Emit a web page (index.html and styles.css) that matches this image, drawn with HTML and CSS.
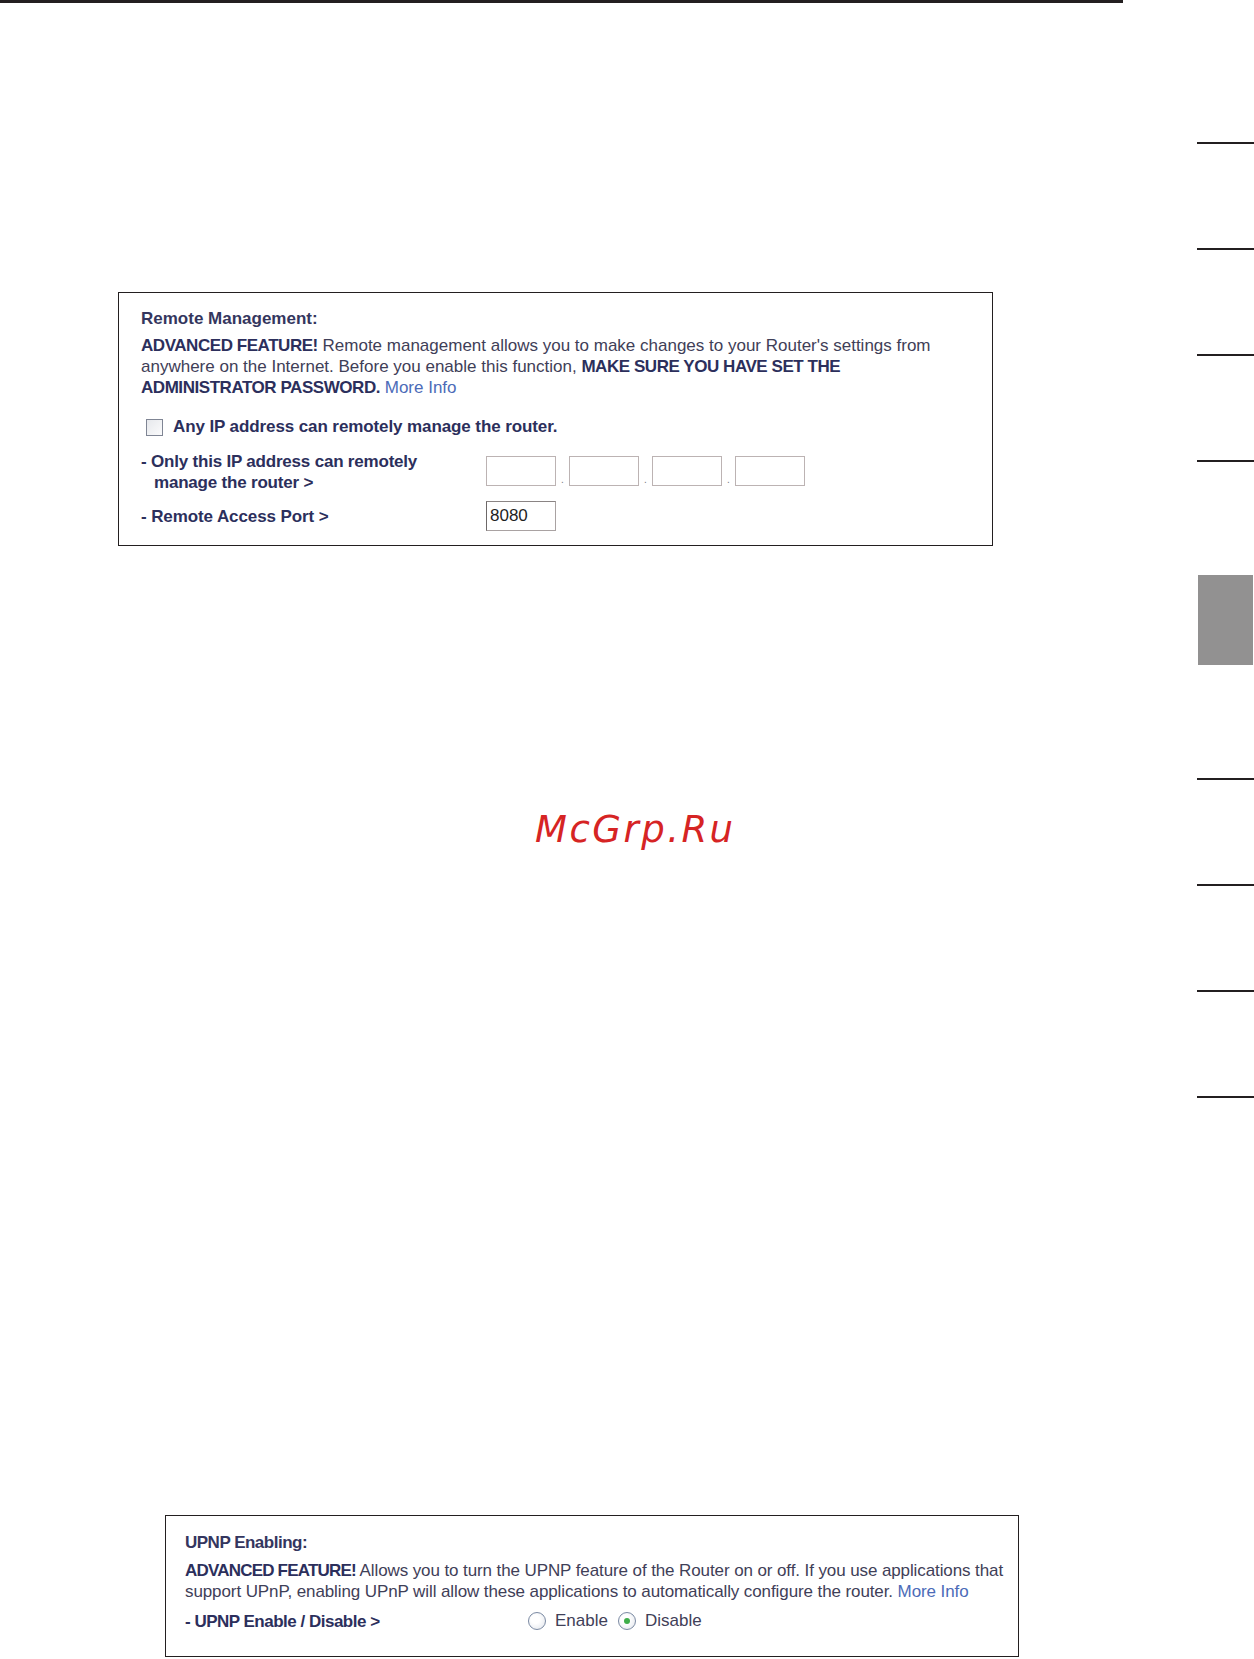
FILE: index.html
```html
<!DOCTYPE html>
<html>
<head>
<meta charset="utf-8">
<link rel="stylesheet" href="styles.css">
</head>
<body>
<div class="page">
  <div class="main">
    <div class="topline"></div>

    <div class="panel panel-remote">
      <div class="heading">Remote Management:</div>
      <p class="desc"><b>ADVANCED FEATURE!</b> Remote management allows you to make changes to your Router's settings from<br>anywhere on the Internet. Before you enable this function, <b>MAKE SURE YOU HAVE SET THE<br>ADMINISTRATOR PASSWORD.</b> <span class="link">More Info</span></p>
      <div class="check-row">
        <span class="checkbox"></span>
        <span class="strong">Any IP address can remotely manage the router.</span>
      </div>
      <div class="ip-row">
        <div class="label strong">- Only this IP address can remotely<br>manage the router &gt;</div>
        <div class="ip-fields">
          <span class="field"></span><span class="dot">.</span>
          <span class="field"></span><span class="dot">.</span>
          <span class="field"></span><span class="dot">.</span>
          <span class="field"></span>
        </div>
      </div>
      <div class="port-row">
        <div class="label strong">- Remote Access Port &gt;</div>
        <span class="field port">8080</span>
      </div>
    </div>

    <div class="watermark">McGrp.Ru</div>

    <div class="panel panel-upnp">
      <div class="heading">UPNP Enabling:</div>
      <p class="desc"><b>ADVANCED FEATURE!</b> Allows you to turn the UPNP feature of the Router on or off. If you use applications that<br>support UPnP, enabling UPnP will allow these applications to automatically configure the router. <span class="link">More Info</span></p>
      <div class="radio-row">
        <div class="label strong">- UPNP Enable / Disable &gt;</div>
        <div class="radios">
          <span class="radio"></span><span class="radio-text">Enable</span>
          <span class="radio checked"></span><span class="radio-text">Disable</span>
        </div>
      </div>
    </div>
  </div>

  <div class="tabs">
    <div class="tab"></div>
    <div class="tab"></div>
    <div class="tab"></div>
    <div class="tab"></div>
    <div class="tab active"><div class="tab-block"></div></div>
    <div class="tab"></div>
    <div class="tab"></div>
    <div class="tab"></div>
    <div class="tab"></div>
  </div>
</div>
</body>
</html>
```

FILE: styles.css
```css
html, body {
  margin: 0;
  padding: 0;
  background: #ffffff;
}

body {
  width: 1254px;
  height: 1659px;
  overflow: hidden;
  font-family: "Liberation Sans", Arial, sans-serif;
}

.page {
  display: flex;
  width: 1254px;
}

.main {
  width: 1197px;
}

.topline {
  width: 1123px;
  height: 3px;
  background: #231f20;
}

.tabs {
  width: 57px;
  padding-top: 142px;
}

.tab {
  height: 104px;
  border-top: 2px solid #231f20;
}

.tab:last-child {
  border-bottom: 2px solid #231f20;
}

.tab.active {
  border-top-color: transparent;
}

.tab.active + .tab {
  border-top-color: transparent;
}

.tab-block {
  margin: 7px 1px 0 1px;
  height: 90px;
  background: #929191;
}

/* panels */
.panel {
  box-sizing: border-box;
  border: 1px solid #231f20;
  color: #3f4058;
  font-size: 17px;
}

.panel b,
.strong {
  font-weight: bold;
  color: #2c2f5c;
}

.desc b {
  letter-spacing: -0.45px;
}

.heading {
  font-weight: bold;
  color: #34365e;
  line-height: 20px;
}

.desc {
  margin: 0;
  line-height: 21px;
  white-space: nowrap;
}

.link {
  color: #4c6bb8;
}

.panel-remote {
  margin-left: 118px;
  margin-top: 289px;
  width: 875px;
  height: 254px;
  padding: 16px 22px 0 22px;
}

.panel-remote .desc {
  margin-top: 6px;
}

.check-row {
  display: flex;
  align-items: center;
  margin-top: 19px;
  height: 20px;
  padding-left: 5px;
}

.check-row .strong {
  letter-spacing: -0.1px;
}

.checkbox {
  box-sizing: border-box;
  width: 17px;
  height: 17px;
  border: 1px solid #7f8594;
  background: linear-gradient(135deg, #e6e8ec, #fbfbfc);
  margin-right: 10px;
}

.ip-row {
  display: flex;
  align-items: flex-start;
  margin-top: 14px;
}

.label {
  width: 345px;
  line-height: 21px;
}

.ip-row .label {
  padding-left: 13px;
  text-indent: -13px;
  box-sizing: border-box;
  letter-spacing: -0.2px;
}

.ip-fields {
  display: flex;
  align-items: flex-end;
  margin-top: 5px;
}

.field {
  box-sizing: border-box;
  display: block;
  width: 70px;
  height: 30px;
  border: 1px solid #bcb3b3;
  background: #ffffff;
}

.dot {
  width: 13px;
  text-align: center;
  font-size: 10px;
  line-height: 12px;
  color: #7a7a7a;
}

.port-row {
  display: flex;
  align-items: center;
  margin-top: 8px;
}

.port-row .label {
  letter-spacing: -0.1px;
}

.port {
  border-color: #a9a2a2;
  border-left-color: #6d6868;
  border-top-color: #8a8484;
  color: #1f1f1f;
  font-size: 17px;
  line-height: 28px;
  padding-left: 3px;
  letter-spacing: 0;
}

.watermark {
  margin-top: 262px;
  margin-left: 535px;
  font-family: "DejaVu Sans", sans-serif;
  font-style: oblique;
  font-size: 37px;
  line-height: 44px;
  letter-spacing: 2.5px;
  color: #d62424;
}

.panel-upnp {
  margin-left: 165px;
  margin-top: 663px;
  width: 854px;
  height: 142px;
  padding: 17px 19px 0 19px;
  letter-spacing: -0.1px;
}

.panel-upnp .heading {
  letter-spacing: -0.5px;
}

.panel-upnp .desc b {
  letter-spacing: -0.8px;
}

.panel-upnp .desc {
  margin-top: 7px;
}

.radio-row {
  display: flex;
  align-items: center;
  margin-top: 9px;
  height: 20px;
}

.radio-row .label {
  width: 343px;
  letter-spacing: -0.5px;
}

.radios {
  display: flex;
  align-items: center;
}

.radio {
  box-sizing: border-box;
  width: 18px;
  height: 18px;
  border-radius: 50%;
  border: 1px solid #7b8aa3;
  background: radial-gradient(circle at 40% 40%, #ffffff 30%, #dfe3ea 100%);
  margin-right: 9px;
  display: flex;
  align-items: center;
  justify-content: center;
}

.radio.checked::after {
  content: "";
  width: 6px;
  height: 6px;
  border-radius: 50%;
  background: #3fae4a;
}

.radio-text {
  color: #3f4058;
  margin-right: 10px;
  letter-spacing: 0;
}
```
